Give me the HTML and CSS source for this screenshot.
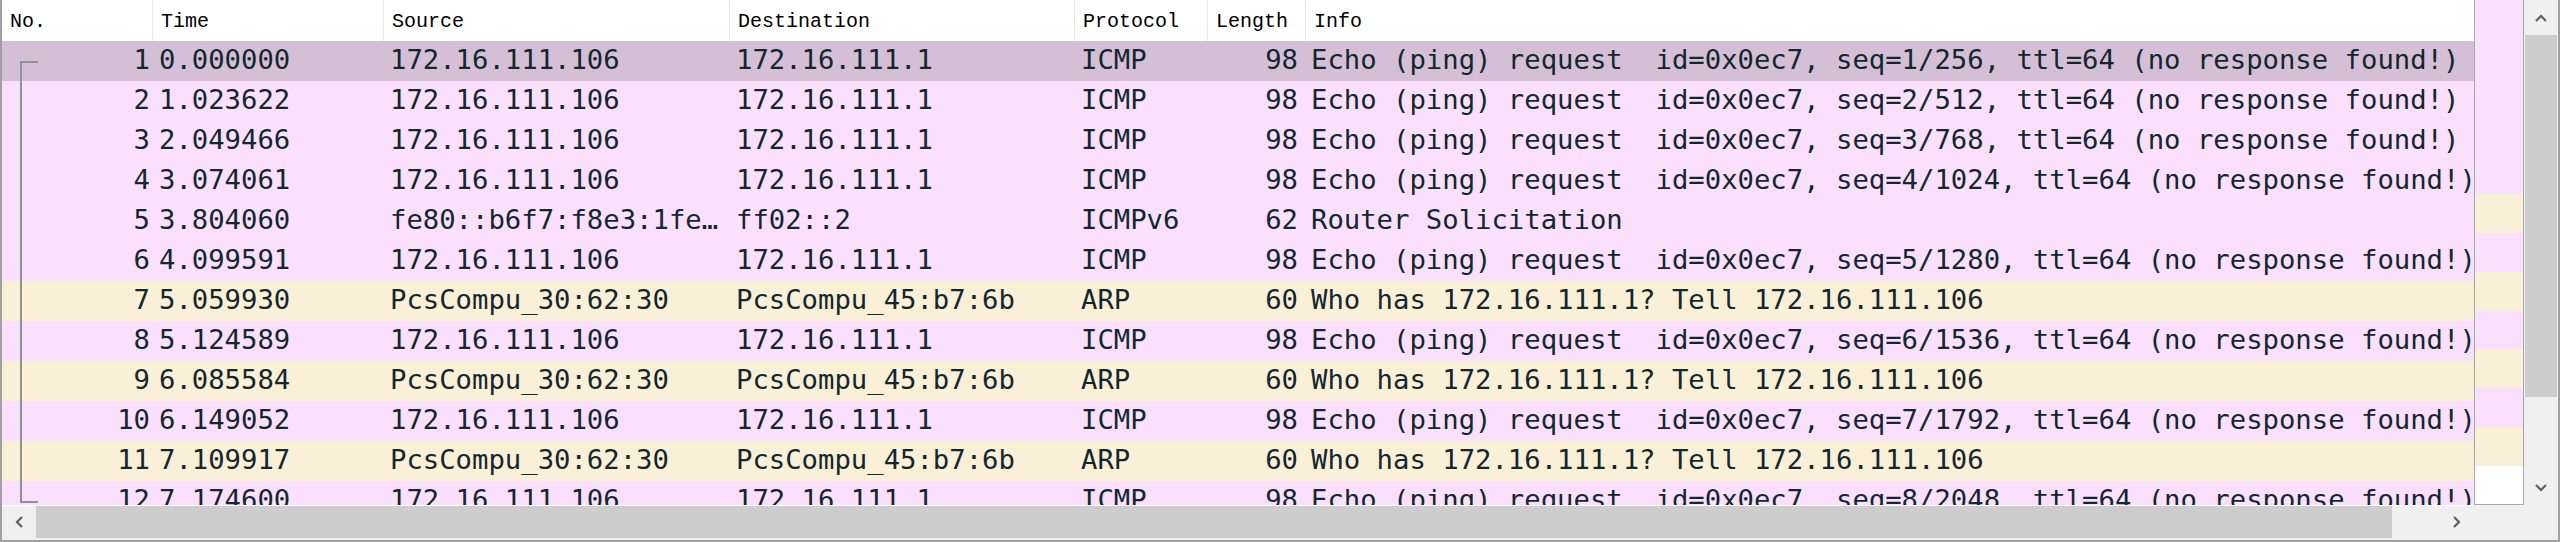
FILE: index.html
```html
<!DOCTYPE html>
<html>
<head>
<meta charset="utf-8">
<link rel="stylesheet" href="styles.css">
</head>
<body>
<div class="frame">
  <div class="list">
    <div class="row head">
      <div class="hc">No.</div>
      <div class="hc">Time</div>
      <div class="hc">Source</div>
      <div class="hc">Destination</div>
      <div class="hc">Protocol</div>
      <div class="hc">Length</div>
      <div class="hc last">Info</div>
    </div>
    <div class="row pkt sel">
      <div class="c no first">1</div><div class="c">0.000000</div><div class="c">172.16.111.106</div><div class="c">172.16.111.1</div><div class="c">ICMP</div><div class="c len">98</div><div class="c info">Echo (ping) request  id=0x0ec7, seq=1/256, ttl=64 (no response found!)</div>
    </div>
    <div class="row pkt icmp">
      <div class="c no mid">2</div><div class="c">1.023622</div><div class="c">172.16.111.106</div><div class="c">172.16.111.1</div><div class="c">ICMP</div><div class="c len">98</div><div class="c info">Echo (ping) request  id=0x0ec7, seq=2/512, ttl=64 (no response found!)</div>
    </div>
    <div class="row pkt icmp">
      <div class="c no mid">3</div><div class="c">2.049466</div><div class="c">172.16.111.106</div><div class="c">172.16.111.1</div><div class="c">ICMP</div><div class="c len">98</div><div class="c info">Echo (ping) request  id=0x0ec7, seq=3/768, ttl=64 (no response found!)</div>
    </div>
    <div class="row pkt icmp">
      <div class="c no mid">4</div><div class="c">3.074061</div><div class="c">172.16.111.106</div><div class="c">172.16.111.1</div><div class="c">ICMP</div><div class="c len">98</div><div class="c info">Echo (ping) request  id=0x0ec7, seq=4/1024, ttl=64 (no response found!)</div>
    </div>
    <div class="row pkt icmp">
      <div class="c no mid">5</div><div class="c">3.804060</div><div class="c">fe80::b6f7:f8e3:1fe…</div><div class="c">ff02::2</div><div class="c">ICMPv6</div><div class="c len">62</div><div class="c info">Router Solicitation</div>
    </div>
    <div class="row pkt icmp">
      <div class="c no mid">6</div><div class="c">4.099591</div><div class="c">172.16.111.106</div><div class="c">172.16.111.1</div><div class="c">ICMP</div><div class="c len">98</div><div class="c info">Echo (ping) request  id=0x0ec7, seq=5/1280, ttl=64 (no response found!)</div>
    </div>
    <div class="row pkt arp">
      <div class="c no mid">7</div><div class="c">5.059930</div><div class="c">PcsCompu_30:62:30</div><div class="c">PcsCompu_45:b7:6b</div><div class="c">ARP</div><div class="c len">60</div><div class="c info">Who has 172.16.111.1? Tell 172.16.111.106</div>
    </div>
    <div class="row pkt icmp">
      <div class="c no mid">8</div><div class="c">5.124589</div><div class="c">172.16.111.106</div><div class="c">172.16.111.1</div><div class="c">ICMP</div><div class="c len">98</div><div class="c info">Echo (ping) request  id=0x0ec7, seq=6/1536, ttl=64 (no response found!)</div>
    </div>
    <div class="row pkt arp">
      <div class="c no mid">9</div><div class="c">6.085584</div><div class="c">PcsCompu_30:62:30</div><div class="c">PcsCompu_45:b7:6b</div><div class="c">ARP</div><div class="c len">60</div><div class="c info">Who has 172.16.111.1? Tell 172.16.111.106</div>
    </div>
    <div class="row pkt icmp">
      <div class="c no mid">10</div><div class="c">6.149052</div><div class="c">172.16.111.106</div><div class="c">172.16.111.1</div><div class="c">ICMP</div><div class="c len">98</div><div class="c info">Echo (ping) request  id=0x0ec7, seq=7/1792, ttl=64 (no response found!)</div>
    </div>
    <div class="row pkt arp">
      <div class="c no mid">11</div><div class="c">7.109917</div><div class="c">PcsCompu_30:62:30</div><div class="c">PcsCompu_45:b7:6b</div><div class="c">ARP</div><div class="c len">60</div><div class="c info">Who has 172.16.111.1? Tell 172.16.111.106</div>
    </div>
    <div class="row pkt icmp">
      <div class="c no lastrel">12</div><div class="c">7.174600</div><div class="c">172.16.111.106</div><div class="c">172.16.111.1</div><div class="c">ICMP</div><div class="c len">98</div><div class="c info">Echo (ping) request  id=0x0ec7, seq=8/2048, ttl=64 (no response found!)</div>
    </div>
  </div>

  <div class="minimap">
    <div class="s p" style="height:194px"></div>
    <div class="s b" style="height:39px"></div>
    <div class="s p" style="height:39px"></div>
    <div class="s b" style="height:39px"></div>
    <div class="s p" style="height:38px"></div>
    <div class="s b" style="height:39px"></div>
    <div class="s p" style="height:39px"></div>
    <div class="s b" style="height:39px"></div>
    <div class="s w"></div>
  </div>

  <div class="vscroll">
    <div class="btn vbtn"><svg width="12" height="8" viewBox="0 0 12 8"><path d="M1 7 L6 2 L11 7" fill="none" stroke="#606060" stroke-width="2.2"/></svg></div>
    <div class="vthumb"></div>
    <div class="vtrack"></div>
    <div class="btn vbtn"><svg width="12" height="8" viewBox="0 0 12 8"><path d="M1 1 L6 6 L11 1" fill="none" stroke="#606060" stroke-width="2.2"/></svg></div>
  </div>

  <div class="hscroll">
    <div class="btn hbtn"><svg width="8" height="12" viewBox="0 0 8 12"><path d="M7 1 L2 6 L7 11" fill="none" stroke="#606060" stroke-width="2.2"/></svg></div>
    <div class="hthumb"></div>
    <div class="htrack"></div>
    <div class="btn hbtn"><svg width="8" height="12" viewBox="0 0 8 12"><path d="M1 1 L6 6 L1 11" fill="none" stroke="#606060" stroke-width="2.2"/></svg></div>
  </div>
  <div class="corner"></div>
</div>
</body>
</html>
```

FILE: styles.css
```css
html, body {
  margin: 0;
  padding: 0;
  background: #ffffff;
}

.frame {
  box-sizing: border-box;
  width: 2560px;
  height: 542px;
  border: 2px solid #a0a0a0;
  border-top: 0;
  display: grid;
  grid-template-columns: 2472px 50px 34px;
  grid-template-rows: 505px 35px;
  overflow: hidden;
}

.list {
  grid-row: 1;
  grid-column: 1;
  overflow: hidden;
  background: #ffffff;
}

.row {
  display: grid;
  grid-template-columns: 151px 231px 346px 345px 133px 98px 1168px;
  white-space: pre;
}

.head {
  height: 41px;
  background: #ffffff;
}

.hc {
  box-sizing: border-box;
  border-right: 1px solid #e5e5e5;
  padding: 3px 0 0 8px;
  font-family: "Liberation Mono", monospace;
  font-size: 20px;
  line-height: 37px;
  color: #000000;
  overflow: hidden;
}

.hc.last {
  border-right: 0;
}

.pkt {
  height: 40px;
}

.icmp { background: #fbe0fe; }
.arp { background: #faf0d7; }
.sel { background: #d5bfd7; }

.c {
  box-sizing: border-box;
  padding: 0 6px;
  font-family: "DejaVu Sans Mono", monospace;
  font-size: 27.25px;
  line-height: 38px;
  color: #12272e;
  overflow: hidden;
}

.c.no {
  position: relative;
  text-align: right;
  padding-right: 3px;
}

.c.len {
  text-align: right;
  padding-right: 8px;
}

.c.info {
  padding-left: 5px;
}

.no::before,
.no::after {
  content: "";
  position: absolute;
  background: #8e9393;
}

.first::before {
  left: 18px;
  width: 2px;
  top: 20px;
  bottom: 0;
}

.first::after {
  left: 18px;
  width: 18px;
  top: 20px;
  height: 2px;
}

.mid::before {
  left: 18px;
  width: 2px;
  top: 0;
  bottom: 0;
}

.mid::after {
  display: none;
}

.lastrel::before {
  left: 18px;
  width: 2px;
  top: 0;
  height: 22px;
}

.lastrel::after {
  left: 18px;
  width: 18px;
  top: 20px;
  height: 2px;
}

.minimap {
  grid-row: 1;
  grid-column: 2;
  box-sizing: border-box;
  border-left: 1px solid #a8a8a8;
  border-right: 1px solid #a8a8a8;
  border-bottom: 1px solid #a8a8a8;
  display: flex;
  flex-direction: column;
  overflow: hidden;
}

.s { flex: none; }
.s.p { background: #fbe0fe; }
.s.b { background: #faf0d7; }
.s.w { flex: 1; background: #ffffff; }

.vscroll {
  grid-row: 1;
  grid-column: 3;
  background: #f0f0f0;
  display: flex;
  flex-direction: column;
  padding: 0 1px 0 1px;
}

.btn {
  display: flex;
  align-items: center;
  justify-content: center;
  flex: none;
}

.vbtn {
  height: 35px;
}

.vthumb {
  height: 362px;
  background: #cdcdcd;
  flex: none;
}

.vtrack {
  flex: 1;
}

.hscroll {
  grid-row: 2;
  grid-column: 1;
  background: #f0f0f0;
  border-top: 1px solid #ffffff;
  display: flex;
  padding-bottom: 2px;
}

.hbtn {
  width: 34px;
}

.hthumb {
  width: 2356px;
  background: #cdcdcd;
  flex: none;
}

.htrack {
  flex: 1;
}

.corner {
  grid-row: 2;
  grid-column: 2 / 4;
  background: #f0f0f0;
}
```
